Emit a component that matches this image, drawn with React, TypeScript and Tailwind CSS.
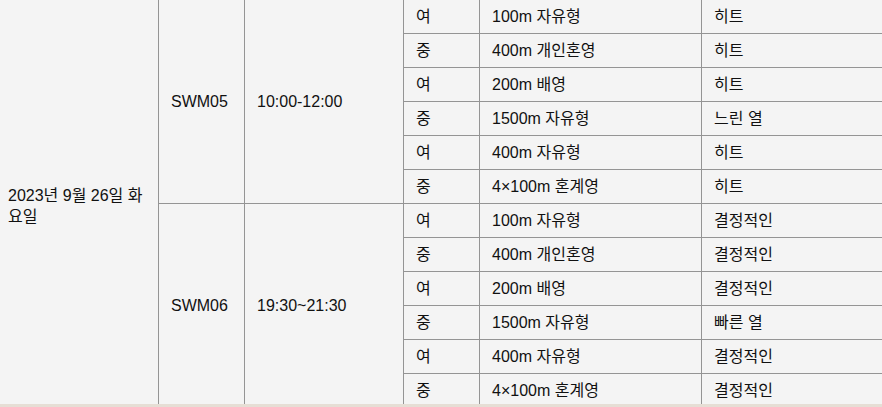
import type { ReactNode } from 'react';

type Event = { sex: string; name: string; stage: string };

const morning: Event[] = [
  { sex: '여', name: '100m 자유형', stage: '히트' },
  { sex: '중', name: '400m 개인혼영', stage: '히트' },
  { sex: '여', name: '200m 배영', stage: '히트' },
  { sex: '중', name: '1500m 자유형', stage: '느린 열' },
  { sex: '여', name: '400m 자유형', stage: '히트' },
  { sex: '중', name: '4×100m 혼계영', stage: '히트' },
];

const evening: Event[] = [
  { sex: '여', name: '100m 자유형', stage: '결정적인' },
  { sex: '중', name: '400m 개인혼영', stage: '결정적인' },
  { sex: '여', name: '200m 배영', stage: '결정적인' },
  { sex: '중', name: '1500m 자유형', stage: '빠른 열' },
  { sex: '여', name: '400m 자유형', stage: '결정적인' },
  { sex: '중', name: '4×100m 혼계영', stage: '결정적인' },
];

function Cell({ children, className = '' }: { children?: ReactNode; className?: string }) {
  return <div className={`flex items-center bg-[#f4f4f4] px-3 ${className}`}>{children}</div>;
}

export default function App() {
  return (
    <div
      className="flex h-[407px] w-full flex-col overflow-hidden bg-[#f4f4f4] text-[16px] leading-5 text-[#111111]"
      style={{ fontFamily: '"Liberation Sans", "Noto Sans CJK KR", sans-serif' }}
    >
      <div className="h-[404px] shrink-0 overflow-hidden">
        <div className="grid h-[407px] grid-cols-[158px_85px_158px_75px_221px_1fr] grid-rows-[repeat(12,33px)] gap-px bg-[#949494]">
          {/* Date */}
          <Cell className="row-span-12 pl-2 pr-3 pt-[4px] leading-[21px]">2023년 9월 26일 화요일</Cell>

          {/* Morning session */}
          <Cell className="row-span-6">SWM05</Cell>
          <Cell className="row-span-6">10:00-12:00</Cell>
          {morning.map((e, i) => (
            <div key={`m${i}`} className="contents">
              <Cell>{e.sex}</Cell>
              <Cell>{e.name}</Cell>
              <Cell>{e.stage}</Cell>
            </div>
          ))}

          {/* Evening session */}
          <Cell className="row-span-6">SWM06</Cell>
          <Cell className="row-span-6">19:30~21:30</Cell>
          {evening.map((e, i) => (
            <div key={`e${i}`} className="contents">
              <Cell>{e.sex}</Cell>
              <Cell>{e.name}</Cell>
              <Cell>{e.stage}</Cell>
            </div>
          ))}
        </div>
      </div>
      <div className="h-[3px] shrink-0 bg-[#e6ded5]" />
    </div>
  );
}
